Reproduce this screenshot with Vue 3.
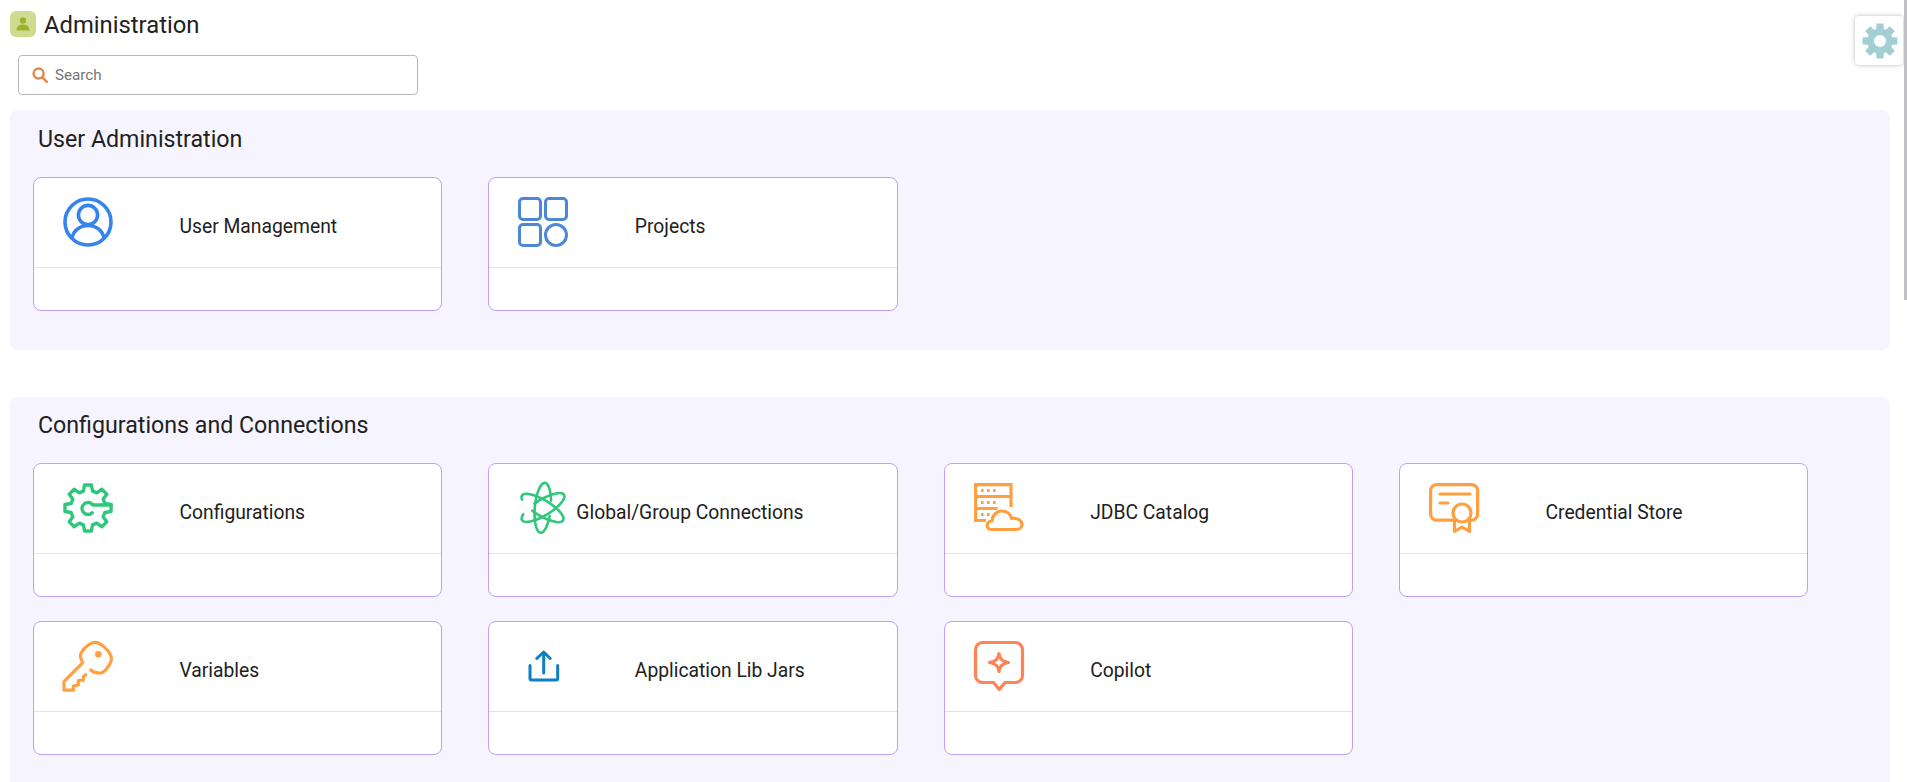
<template>
  <div class="page">
    <header class="page-head">
      <span class="head-icon">
        <svg width="16" height="16" viewBox="0 0 16 16">
          <circle cx="8" cy="4.5" r="3.2" fill="#9cb22f" />
          <path d="M1.5 14.5c0-4 2.5-6 6.5-6s6.5 2 6.5 6z" fill="#9cb22f" />
        </svg>
      </span>
      <h1>Administration</h1>
    </header>

    <div class="search">
      <svg width="16" height="16" viewBox="0 0 16 16" fill="none" stroke="#e08a4e" stroke-width="2.500">
        <circle cx="6.600" cy="6.600" r="5" />
        <path d="M10.600 10.600l4.200 4.200" stroke-linecap="round" />
      </svg>
      <span class="placeholder">Search</span>
    </div>

    <section class="group group-first">
      <h2>User Administration</h2>
      <div class="cards">
        <div class="card">
          <div class="card-head">
            <svg class="icon" viewBox="0 0 50 50" fill="none" stroke="#3584ec" stroke-width="3.600">
              <circle cx="25" cy="25" r="23" />
              <circle cx="25" cy="18" r="9.600" />
              <path d="M9 41c1.500-7.500 8-12.500 16-12.500S39.500 33.500 41 41" />
            </svg>
            <span class="card-label">User Management</span>
          </div>
        </div>
        <div class="card">
          <div class="card-head">
            <svg class="icon" viewBox="0 0 50 50" fill="none" stroke="#4d88d4" stroke-width="3">
              <rect x="1.500" y="1.500" width="21" height="21" rx="3.500" />
              <rect x="27.500" y="1.500" width="21" height="21" rx="3.500" />
              <rect x="1.500" y="27.500" width="21" height="21" rx="3.500" />
              <circle cx="38" cy="38" r="10.500" />
            </svg>
            <span class="card-label">Projects</span>
          </div>
        </div>
      </div>
    </section>

    <section class="group">
      <h2>Configurations and Connections</h2>
      <div class="cards">
        <div class="card">
          <div class="card-head">
            <svg class="icon" viewBox="0 0 50 50" fill="none" stroke="#2fc77c" stroke-width="3.400" stroke-linejoin="round" stroke-linecap="round">
              <path :d="configGear" />
              <path d="M29.200 29.700A6 6 0 1 1 29.900 22H48.500" />
            </svg>
            <span class="card-label">Configurations</span>
          </div>
        </div>
        <div class="card">
          <div class="card-head">
            <svg class="icon" viewBox="0 0 50 50" fill="none" stroke="#2fc77c" stroke-width="2.600" stroke-linecap="round">
              <ellipse cx="24.800" cy="24.800" rx="25" ry="8" pathLength="100" stroke-dasharray="68 14 18 0" transform="rotate(95 24.800 24.800)" />
              <ellipse cx="24.500" cy="25" rx="24" ry="8" pathLength="100" stroke-dasharray="32 14 54 0" transform="rotate(31 24.500 25)" />
              <ellipse cx="25" cy="24.500" rx="24.500" ry="8" pathLength="100" stroke-dasharray="56 14 30 0" transform="rotate(-31 25 24.500)" />
            </svg>
            <span class="card-label card-label-wide">Global/Group Connections</span>
          </div>
        </div>
        <div class="card">
          <div class="card-head">
            <svg class="icon" viewBox="0 0 50 50" fill="none" stroke="#ff9f40" stroke-width="3.200" stroke-linecap="round" stroke-linejoin="round">
              <path d="M12 37.500H1.600V1.600h35.400V24" stroke-linecap="butt" stroke-linejoin="miter" />
              <path d="M1.600 13.500h35.400M1.600 25.500h22" stroke-linecap="butt" />
              <path d="M7 7.500h2.600M13 7.500h2.600M19 7.500h2.600M7 19.500h2.600M13 19.500h2.600M19 19.500h2.600M7 31.500h2.600M13 31.500h2.600" stroke-width="3" stroke-linecap="butt" />
              <path d="M18 46.500c-6.500.5-6.500-8.500 0-8.500 .5-6 5-10 10-10 4.500 0 8.500 3 9.500 7.500 4.500-1 10.500 1.500 10.500 6 0 3-2.500 5-5.500 5z" fill="#fff" />
            </svg>
            <span class="card-label">JDBC Catalog</span>
          </div>
        </div>
        <div class="card">
          <div class="card-head">
            <svg class="icon" viewBox="0 0 50 50" fill="none" stroke="#ff9f40" stroke-width="3.200" stroke-linecap="round" stroke-linejoin="round">
              <rect x="1.600" y="1.600" width="47" height="35.500" rx="6" />
              <path d="M11 11h30M11 20h8" />
              <path d="M25.500 36v12.500l7.500-4.500 7.500 4.500V36" fill="#fff" />
              <circle cx="33" cy="30" r="9" fill="#fff" />
            </svg>
            <span class="card-label">Credential Store</span>
          </div>
        </div>
        <div class="card">
          <div class="card-head">
            <svg class="icon" viewBox="0 0 50 50" fill="none" stroke="#ff9f40" stroke-width="3.200" stroke-linejoin="round" stroke-linecap="round">
              <path d="M27.700 29c3 2.500 7 3.500 11 2.700 4-1.500 10-10 9.800-14.500C47.500 10 37 .8 31 1.500 26 2 18.500 9 17.500 14c-.5 3 1 5 2.200 7.700L1 40.700v8.500h9.300V45l5-1v-4.300l5-.7v-3.300l2.400-2" />
              <circle cx="35.300" cy="13.300" r="3.200" fill="#ff9f40" stroke="none" />
            </svg>
            <span class="card-label">Variables</span>
          </div>
        </div>
        <div class="card">
          <div class="card-head">
            <svg class="icon" viewBox="0 0 50 50" fill="none" stroke="#0d7fc2" stroke-width="3" stroke-linecap="round" stroke-linejoin="round">
              <path d="M12 24.500V37.500a1.500 1.500 0 0 0 1.500 1.500H38.200a1.500 1.500 0 0 0 1.500-1.500V24.500" />
              <path d="M25.700 32V11.500M18.700 17.500l7-6.500 6.500 6.500" />
            </svg>
            <span class="card-label">Application Lib Jars</span>
          </div>
        </div>
        <div class="card">
          <div class="card-head">
            <svg class="icon" viewBox="0 0 50 50" fill="none" stroke="#ff8355" stroke-width="3.200" stroke-linecap="round" stroke-linejoin="round">
              <path d="M8.500 1.500h33a7 7 0 0 1 7 7v26a7 7 0 0 1-7 7H31L25.300 48.500 19.500 41.500H8.500a7 7 0 0 1-7-7v-26a7 7 0 0 1 7-7z" />
              <path d="M25 12.500c.8 5.500 3 8 9.500 9-6.500 1.300-8.700 3.500-9.500 9-.8-5.500-3-7.700-9.500-9 6.500-1 8.700-3.500 9.500-9z" />
            </svg>
            <span class="card-label">Copilot</span>
          </div>
        </div>
      </div>
    </section>

    <button class="settings" aria-label="Settings">
      <svg width="36" height="36" viewBox="0 0 36 36">
        <path :d="settingsGear" fill="#a3cfd3" fill-rule="evenodd" />
      </svg>
    </button>
    <div class="scrollbar"></div>
  </div>
</template>

<script setup>
// builds a gear outline with 8 teeth around (cx, cy)
function gearPath(cx, cy, outer, inner, toothHalf, rootHalf) {
  const points = []
  for (let i = 0; i < 8; i++) {
    const a = (i * Math.PI) / 4
    const rows = [
      [inner, a - rootHalf],
      [outer, a - toothHalf],
      [outer, a + toothHalf],
      [inner, a + rootHalf]
    ]
    rows.forEach(([r, t]) => {
      points.push(`${(cx + r * Math.cos(t)).toFixed(2)} ${(cy + r * Math.sin(t)).toFixed(2)}`)
    })
  }
  return `M${points.join('L')}Z`
}

const configGear = gearPath(25, 25, 23.3, 17.5, 0.15, 0.26)

const hole = 'M18 12a6 6 0 1 0 0 12a6 6 0 1 0 0-12Z'
const settingsGear = gearPath(18, 18, 17.8, 12.8, 0.2, 0.3) + hole
</script>

<style>
html,
body {
  margin: 0;
  height: 100%;
  overflow: hidden;
  background: #fff;
}
</style>

<style scoped>
.page {
  position: relative;
  height: 782px;
  overflow: hidden;
  padding: 11px 17px 0 10px;
  box-sizing: border-box;
  font-family: Roboto, "Liberation Sans", sans-serif;
  color: #212121;
}
.page-head {
  display: flex;
  align-items: center;
  gap: 8px;
  height: 26px;
}
.head-icon {
  width: 26px;
  height: 26px;
  border-radius: 6px;
  background: #cfdc8f;
  display: flex;
  align-items: center;
  justify-content: center;
}
h1 {
  margin: 1px 0 0;
  font-size: 23.8px;
  font-weight: 400;
  line-height: 26px;
}
.search {
  margin: 18px 0 0 8px;
  width: 400px;
  height: 40px;
  box-sizing: border-box;
  border: 1px solid #b9b9b9;
  border-radius: 4px;
  padding: 0 13px;
  display: flex;
  align-items: center;
  gap: 7px;
}
.placeholder {
  font-size: 15.2px;
  color: #757575;
}
.group {
  background: #f6f4ff;
  border-radius: 8px;
  padding: 13px 23px 39px;
}
.group-first {
  margin: 15px 0 47px;
  padding-top: 14px;
}
h2 {
  margin: 0 0 23px 5px;
  font-size: 23.2px;
  font-weight: 400;
  line-height: 30px;
}
.cards {
  display: grid;
  grid-template-columns: repeat(4, 409.33px);
  column-gap: 46px;
  row-gap: 24px;
}
.card {
  height: 134px;
  box-sizing: border-box;
  border: 1px solid #bf9ff7;
  border-radius: 8px;
  background: #fff;
}
.card-head {
  height: 90px;
  box-sizing: border-box;
  border-bottom: 1px solid #e3e3e6;
  padding: 19px 0 0 29px;
  display: flex;
}
.icon {
  width: 50px;
  height: 50px;
  flex: none;
  overflow: visible;
}
.card-label {
  margin: 18px 0 0 66.5px;
  font-size: 19.3px;
  line-height: 24px;
  white-space: nowrap;
}
.card-label-wide {
  margin-left: 8px;
}
.settings {
  position: absolute;
  top: 16px;
  left: 1855px;
  width: 48px;
  height: 49px;
  padding: 0 0 0 1px;
  border: none;
  border-radius: 4px;
  background: #fff;
  box-shadow: 0 0 4px rgba(0, 0, 0, 0.28);
  display: flex;
  align-items: center;
  justify-content: center;
}
.scrollbar {
  position: absolute;
  top: 0;
  right: 0;
  width: 3px;
  height: 300px;
  background: #c1c1c4;
}
</style>
